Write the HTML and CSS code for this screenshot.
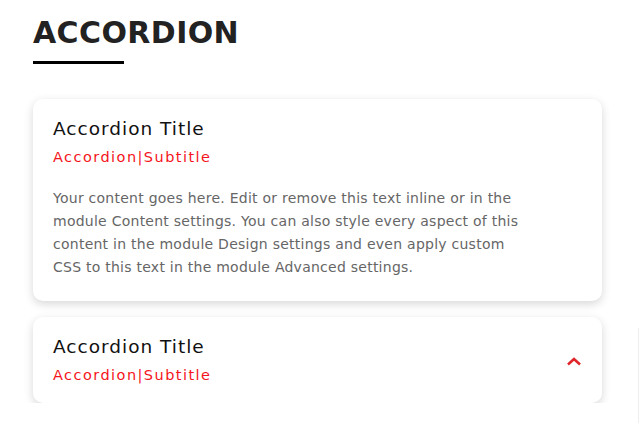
FILE: index.html
```html
<!DOCTYPE html>
<html>
<head>
<meta charset="utf-8">
<link rel="stylesheet" href="styles.css">
</head>
<body>
<div class="page">
  <h1 class="heading">ACCORDION</h1>
  <div class="rule"></div>
  <div class="accordion">
    <div class="item open">
      <div class="item-head">
        <div class="titles">
          <div class="title">Accordion Title</div>
          <div class="subtitle">Accordion|Subtitle</div>
        </div>
      </div>
      <p class="content">Your content goes here. Edit or remove this text inline or in the module Content settings. You can also style every aspect of this content in the module Design settings and even apply custom CSS to this text in the module Advanced settings.</p>
    </div>
    <div class="item">
      <div class="item-head">
        <div class="titles">
          <div class="title">Accordion Title</div>
          <div class="subtitle">Accordion|Subtitle</div>
        </div>
        <svg class="chev" width="16" height="10" viewBox="0 0 16 10"><path d="M2 8.5 L8 3 L14 8.5" fill="none" stroke="#e0262a" stroke-width="2.6"/></svg>
      </div>
    </div>
  </div>
</div>
<div class="edge"></div>
</body>
</html>
```
FILE: styles.css
```css
html, body {
  margin: 0;
  padding: 0;
  background: #fff;
}
body {
  font-family: "DejaVu Sans", sans-serif;
}
.page {
  padding: 13px 38px 0 33px;
  width: 569px;
}
.heading {
  margin: 0;
  font-size: 30px;
  line-height: 40px;
  font-weight: bold;
  color: #222;
  letter-spacing: 0.4px;
}
.rule {
  width: 91px;
  height: 3px;
  background: #000;
  margin-top: 8px;
}
.accordion {
  margin-top: 35px;
  display: flex;
  flex-direction: column;
  gap: 16px;
}
.item {
  background: #fff;
  border-radius: 10px;
  box-shadow: 0 3px 10px rgba(0,0,0,0.16);
  padding: 18px 20px 16px 20px;
}
.item-head {
  display: flex;
  align-items: center;
  justify-content: space-between;
}
.title {
  font-size: 18.5px;
  line-height: 24px;
  color: #111;
  letter-spacing: 1px;
}
.subtitle {
  margin-top: 4px;
  font-size: 14.5px;
  line-height: 24px;
  color: #f5141b;
  letter-spacing: 1.45px;
}
.content {
  margin: 18px 0 6px 0;
  max-width: 478px;
  font-size: 14px;
  line-height: 23px;
  color: #666;
  letter-spacing: 0.25px;
}
.edge {
  position: absolute;
  left: 638px;
  top: 328px;
  width: 1px;
  height: 95px;
  background: #eee;
}
```
